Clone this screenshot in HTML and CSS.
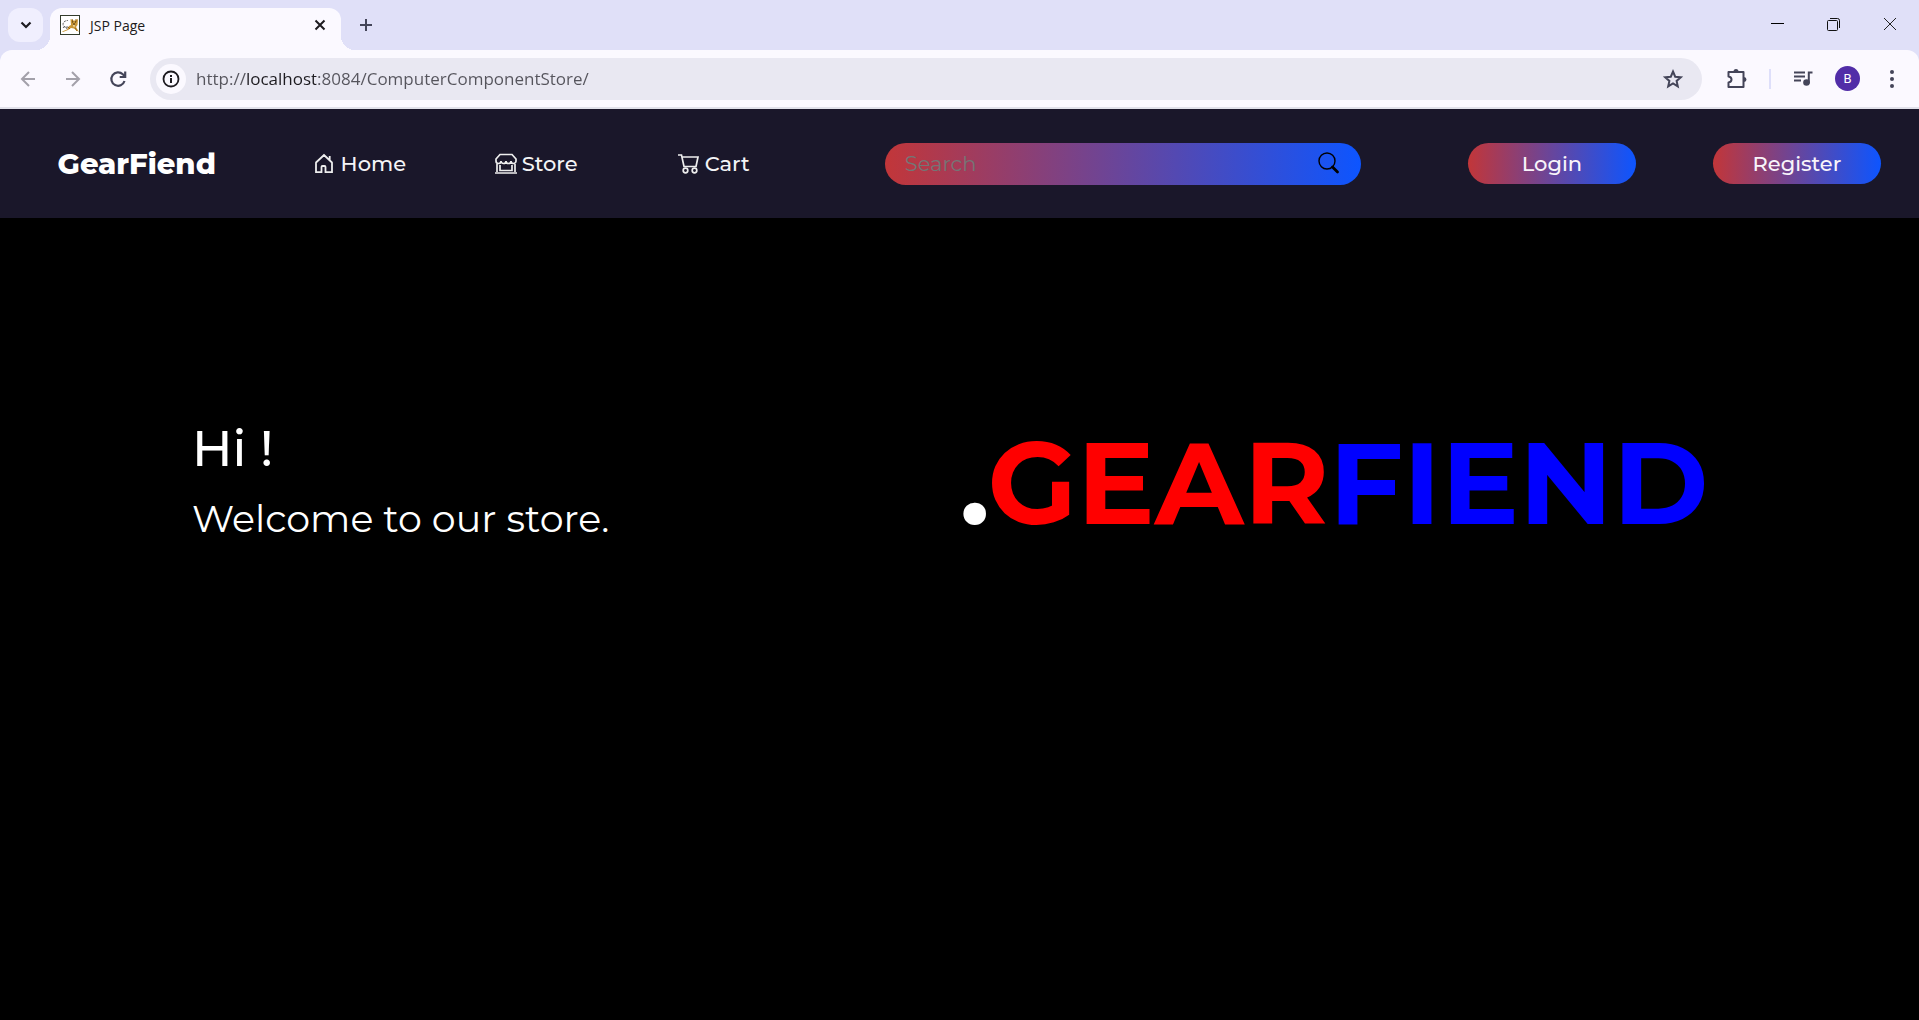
FILE: index.html
```html
<!DOCTYPE html>
<html lang="en">
<head>
<meta charset="utf-8">
<meta name="viewport" content="width=device-width, initial-scale=1">
<title>JSP Page</title>
<link rel="stylesheet" href="styles.css">
</head>
<body>
<div class="browser">
  <div class="tabstrip">
    <button class="tab-search" aria-label="Search tabs"><svg width="20" height="20" viewBox="0 0 20 20"><path d="M5.500 7.500l4.500 4.500 4.500-4.500" fill="none" stroke="#1d1b20" stroke-width="2.200"/></svg></button>
    <div class="tab">
      <svg class="favicon" width="20" height="20" viewBox="0 0 20 20"><rect x=".5" y=".5" width="19" height="19" fill="#fff" stroke="#333b2c"/><path d="M2 16.500l5-2 2-3.500 2-1-.5-6 2 1.500h3l2.500-1.500-.5 6-1.500 2 3 5-5-3.500-3-.5-3 2-5 2z" fill="#c99535"/><path d="M12 4l1 3M16 4v3M8 12l2 2M15 13l2 3" stroke="#9a6815" fill="none"/><path d="M8 12C3 13 2 9 4 7s4-1 4-2M3 13c1-2 3-1 4 1" stroke="#555" stroke-dasharray="2 1" fill="none"/><path d="M12 7h1M15 7h1M13 9h2" stroke="#423014"/><path d="M13 10l2 .5-1 2z" fill="#fff2c7"/></svg>
      <span class="tab-title">JSP Page</span>
      <button class="tab-close" aria-label="Close tab"><svg width="20" height="20" viewBox="0 0 20 20"><path d="M5.500 5.500l9 9m0-9l-9 9" fill="none" stroke="#1d1b20" stroke-width="2"/></svg></button>
    </div>
    <button class="new-tab" aria-label="New tab"><svg width="20" height="20" viewBox="0 0 20 20"><path d="M10 4v12M4 10h12" fill="none" stroke="#444559" stroke-width="2"/></svg></button>
    <div class="window-controls">
      <button aria-label="Minimize"><svg width="20" height="20" viewBox="0 0 20 20"><path d="M3 8.500h13" stroke="#000"/></svg></button>
      <button aria-label="Restore"><svg width="20" height="20" viewBox="0 0 20 20" fill="none" stroke="#111"><rect x="3.500" y="5.500" width="10" height="10" rx="1"/><path d="M6 3.500h7.500q2 0 2 2V13"/></svg></button>
      <button aria-label="Close"><svg width="20" height="20" viewBox="0 0 20 20"><path d="M4 3l12 12M16 3L4 15" stroke="#222" fill="none"/></svg></button>
    </div>
  </div>
  <div class="toolbar">
    <div class="toolbar-nav">
      <button aria-label="Back"><svg width="20" height="20" viewBox="0 0 20 20" fill="none" stroke="#a3a1aa" stroke-width="2"><path d="M17 10H4m7-7l-7 7 7 7"/></svg></button>
      <button aria-label="Forward"><svg width="20" height="20" viewBox="0 0 20 20" fill="none" stroke="#a3a1aa" stroke-width="2"><path d="M3 10h13M9 3l7 7-7 7"/></svg></button>
      <button aria-label="Reload"><svg width="20" height="20" viewBox="0 0 20 20" fill="none" stroke="#444559" stroke-width="2.200"><path d="M16.500 12a6.700 6.700 0 1 1-1.700-6.700L17 7.500M17.200 2.500V8h-5.500"/></svg></button>
    </div>
    <div class="omnibox">
      <button class="site-info" aria-label="View site information"><svg width="20" height="20" viewBox="0 0 20 20"><circle cx="10" cy="10" r="7.500" fill="none" stroke="#1d1b20" stroke-width="1.800"/><path d="M10 9v5M10 6v2" stroke="#1d1b20" stroke-width="2"/></svg></button>
      <input class="address" type="text" aria-label="Address bar" value="http://localhost:8084/ComputerComponentStore/">
      <button class="bookmark" aria-label="Bookmark this page"><svg width="22" height="22" viewBox="0 0 22 22"><path d="M11 3.500l2.200 5.200 5.600.5-4.200 3.700 1.200 5.500-4.800-2.900-4.800 2.900 1.200-5.500-4.200-3.700 5.600-.5z" fill="none" stroke="#444559" stroke-width="2"/></svg></button>
    </div>
    <div class="toolbar-actions">
      <button aria-label="Extensions"><svg width="22" height="22" viewBox="0 0 22 22"><path d="M2.500 4h15v15h-15v-4.500c4-.5 4-5.500 0-6z" fill="none" stroke="#444559" stroke-width="2" stroke-linejoin="round"/><path d="M7.500 3.500a2.500 2.500 0 0 1 5 0zM18 9a2.500 2.500 0 0 1 0 5z" fill="#444559"/></svg></button>
      <span class="divider"></span>
      <button aria-label="Media controls"><svg width="22" height="22" viewBox="0 0 22 22"><path d="M2 4.500h11M2 8.500h11M2 12.500h7" stroke="#444559" stroke-width="2"/><path d="M20.500 4.500h-3.700v11" fill="none" stroke="#444559" stroke-width="2"/><circle cx="14.500" cy="14.500" r="3.300" fill="#444559"/></svg></button>
      <button class="avatar" aria-label="Profile B">B</button>
      <button aria-label="Menu"><svg width="22" height="22" viewBox="0 0 22 22" fill="#444559"><circle cx="11" cy="4" r="2"/><circle cx="11" cy="11" r="2"/><circle cx="11" cy="18" r="2"/></svg></button>
    </div>
  </div>
</div>

<header class="site-header">
  <a class="brand" href="#">GearFiend</a>
  <nav class="site-nav">
    <a href="#"><svg width="22" height="22" viewBox="0 0 22 22" fill="none" stroke="#eee" stroke-width="1.800"><path d="M2 9v10.200h5.500V14q0-1 1-1h2q1 0 1 1v5.200H18V9M1.500 10L10 2l8.500 8M15.700 7V3"/></svg>Home</a>
    <a href="#"><svg width="22" height="22" viewBox="0 0 22 22" fill="none" stroke="#eee" stroke-width="1.700"><path d="M5 1.500h12L21 6v2a2.500 2.500 0 0 1-5 0 2.500 2.500 0 0 1-5 0 2.500 2.500 0 0 1-5 0 2.500 2.500 0 0 1-5 0V6zM2 11v8M20 11v8M0 20h22M5 12v5.500h12V12"/></svg>Store</a>
    <a href="#"><svg width="22" height="22" viewBox="0 0 22 22" fill="none" stroke="#eee" stroke-width="1.700"><path d="M0 2h3.500L6 13.500h12L20 4H4"/><circle cx="7.500" cy="17.500" r="2.300"/><circle cx="16.500" cy="17.500" r="2.300"/></svg>Cart</a>
  </nav>
  <form class="search" role="search">
    <input type="search" aria-label="Search" placeholder="Search">
    <button type="button" aria-label="Submit search"><svg width="24" height="24" viewBox="0 0 24 24" fill="none" stroke="#000"><circle cx="10" cy="9" r="8" stroke-width="1.400"/><path d="M15.500 15l5 5" stroke-width="2.800" stroke-linecap="round"/></svg></button>
  </form>
  <div class="account">
    <button class="pill">Login</button>
    <button class="pill">Register</button>
  </div>
</header>

<main class="hero">
  <div class="greeting">
    <h1>Hi !</h1>
    <p>Welcome to our store.</p>
  </div>
  <h2 class="wordmark">.<span class="red">GEAR</span><span class="blue">FIEND</span></h2>
</main>
</body>
</html>
```
FILE: styles.css
```css
* { box-sizing: border-box; }
body {
  margin: 0;
  min-height: 100vh;
  background: #000;
  color: #fff;
  font-family: Montserrat, Inter, sans-serif;
}
button, input { font: inherit; border: 0; padding: 0; }
button { display: flex; align-items: center; justify-content: center; background: none; color: inherit; }
svg { display: block; flex: none; }

/* Browser window */
.browser {
  background: #e0e0f8;
  border-bottom: 2px solid #e1e1ea;
  color: #1d1b20;
  font-family: "Segoe UI", "Open Sans", sans-serif;
}
.tabstrip { display: flex; height: 50px; padding: 8px 8px 0; }
.tab-search { width: 35px; height: 34px; margin-right: 7px; border-radius: 12px; background: #f0effe; }
.tab {
  position: relative;
  display: flex;
  align-items: center;
  width: 291px;
  padding: 0 11px 8px 10px;
  gap: 10px;
  border-radius: 12px 12px 0 0;
  background: #fbf9ff;
  font-size: 14px;
}
.tab::before, .tab::after { content: ""; position: absolute; bottom: 0; width: 14px; height: 14px; }
.tab::before { right: 100%; background: radial-gradient(circle at 0 0, transparent 14px, #fbf9ff 14px); }
.tab::after { left: 100%; background: radial-gradient(circle at 100% 0, transparent 14px, #fbf9ff 14px); }
.tab-title { flex: 1; }
.new-tab { width: 34px; height: 34px; margin-left: 8px; }
.window-controls { display: flex; gap: 36px; height: 34px; margin-left: auto; padding-right: 11px; }
.toolbar {
  display: flex;
  align-items: center;
  height: 57px;
  padding: 0 16px 0 18px;
  border-radius: 12px 12px 0 0;
  background: #fbf9ff;
}
.toolbar-nav { display: flex; gap: 25px; width: 132px; }
.omnibox {
  display: flex;
  flex: 1;
  align-items: center;
  height: 42px;
  padding: 0 18px 0 6px;
  border-radius: 21px;
  background: #e9e8f2;
}
.site-info { width: 30px; height: 30px; border-radius: 50%; background: #fbf9ff; }
.address {
  flex: 1;
  min-width: 0;
  margin: 0 10px;
  background: linear-gradient(90deg, #55545c 50px, #1d1b20 50px 120px, #55545c 120px);
  -webkit-background-clip: text;
  background-clip: text;
  color: transparent;
  font-size: 17px;
}
.toolbar-actions { display: flex; align-items: center; gap: 21px; padding-left: 24px; }
.divider { width: 2px; height: 20px; background: #dedffa; }
.avatar { width: 25px; height: 25px; border-radius: 50%; background: #512da8; color: #fff; font-family: Roboto, sans-serif; font-size: 13px; }

/* Store header */
.site-header {
  display: grid;
  grid-template-columns: 256fr 571fr 583fr 451fr;
  align-items: center;
  height: 109px;
  padding-left: 3%;
  background: #1a172a;
  font-size: 21px;
  font-weight: 500;
}
a { color: #fff; text-decoration: none; }
.brand { font-size: 29px; font-weight: 800; }
.site-nav { display: grid; grid-template-columns: 181fr 183fr 207fr; }
.site-nav a { display: flex; align-items: center; gap: 5px; color: #f4f4f6; }
.search, .pill { background: linear-gradient(90deg, #c23639, #0d55ff); border-radius: 21px; }
.search { display: flex; align-items: center; width: 82%; max-width: 476px; height: 42px; padding: 0 20px; }
.search input { flex: 1; min-width: 0; background: none; color: #fff; font-weight: 400; outline: 0; }
.search input::placeholder { color: #757575; }
.account { display: grid; grid-template-columns: 245fr 206fr; }
.pill { width: 168px; height: 41px; color: #f8f4fa; }

/* Hero */
.hero { display: grid; grid-template-columns: 1fr 1fr; padding: 201px 5% 0; }
h1, h2, p { margin: 0; }
.greeting { display: flex; flex-direction: column; padding-left: 96px; }
h1 { font-size: 50px; font-weight: 500; line-height: 60px; }
p { font-size: 38px; font-weight: 400; line-height: 80px; }
.wordmark { font-size: 116px; font-weight: 700; line-height: 128px; white-space: nowrap; }
.red { color: red; }
.blue { color: blue; }
```
